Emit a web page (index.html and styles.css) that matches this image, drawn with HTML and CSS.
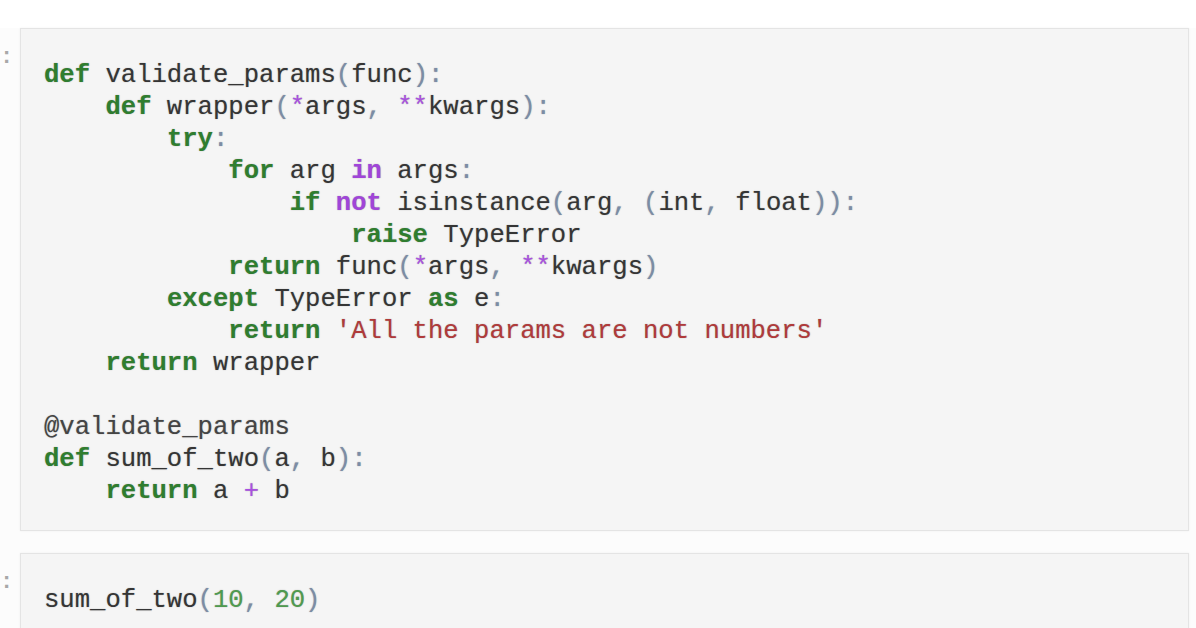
FILE: index.html
```html
<!DOCTYPE html>
<html>
<head>
<meta charset="utf-8">
<link rel="stylesheet" href="styles.css">
</head>
<body>
<div class="notebook">
  <div class="cell">
    <div class="prompt">:</div>
    <div class="input"><pre class="code"><span class="kw">def</span> validate_params<span class="p">(</span>func<span class="p">):</span>
    <span class="kw">def</span> wrapper<span class="p">(</span><span class="op">*</span>args<span class="p">,</span> <span class="op">**</span>kwargs<span class="p">):</span>
        <span class="kw">try</span><span class="p">:</span>
            <span class="kw">for</span> arg <span class="ow">in</span> args<span class="p">:</span>
                <span class="kw">if</span> <span class="ow">not</span> isinstance<span class="p">(</span>arg<span class="p">,</span> <span class="p">(</span>int<span class="p">,</span> float<span class="p">)):</span>
                    <span class="kw">raise</span> TypeError
            <span class="kw">return</span> func<span class="p">(</span><span class="op">*</span>args<span class="p">,</span> <span class="op">**</span>kwargs<span class="p">)</span>
        <span class="kw">except</span> TypeError <span class="kw">as</span> e<span class="p">:</span>
            <span class="kw">return</span> <span class="str">'All the params are not numbers'</span>
    <span class="kw">return</span> wrapper

<span class="deco">@validate_params</span>
<span class="kw">def</span> sum_of_two<span class="p">(</span>a<span class="p">,</span> b<span class="p">):</span>
    <span class="kw">return</span> a <span class="op">+</span> b</pre></div>
  </div>
  <div class="cell">
    <div class="prompt">:</div>
    <div class="input"><pre class="code">sum_of_two<span class="p">(</span><span class="num">10</span><span class="p">,</span> <span class="num">20</span><span class="p">)</span></pre></div>
  </div>
</div>
</body>
</html>
```

FILE: styles.css
```css
html, body {
  margin: 0;
  padding: 0;
  background: #fdfdfd;
  overflow: hidden;
}

.notebook {
  padding-top: 28px;
  display: flex;
  flex-direction: column;
  gap: 22px;
  background: linear-gradient(#ffffff 0, #ffffff 28px, #fcfcfc 28px);
}

.cell {
  display: flex;
  align-items: flex-start;
  padding-right: 7px;
}

.prompt {
  flex: 0 0 20px;
  width: 20px;
  display: flex;
  justify-content: flex-start;
  white-space: nowrap;
  font-family: "Liberation Mono", monospace;
  font-size: 22px;
  font-weight: bold;
  line-height: 30px;
  padding-top: 15px;
  color: #a8a8a8;
}

.input {
  flex: 1;
  background: #f5f5f5;
  border: 1px solid #e4e4e4;
  box-shadow: 0 0 2px rgba(0,0,0,0.06);
  min-height: 100px;
}

.code {
  margin: 0;
  padding: 31px 23px 22px 23px;
  font-family: "Liberation Mono", "Courier New", monospace;
  font-size: 25.6px;
  line-height: 32px;
  color: #353535;
  text-shadow: 0 0 1.2px rgba(40,40,40,0.4);
}

.kw {
  color: #2f7d2f;
  font-weight: bold;
}

.ow {
  color: #a045d8;
  font-weight: bold;
}

.op {
  color: #a94fe0;
}

.p {
  color: #7b8ca6;
}

.str {
  color: #b03a3a;
}

.num {
  color: #4f9a4f;
}

.deco {
  color: #444444;
}
```
